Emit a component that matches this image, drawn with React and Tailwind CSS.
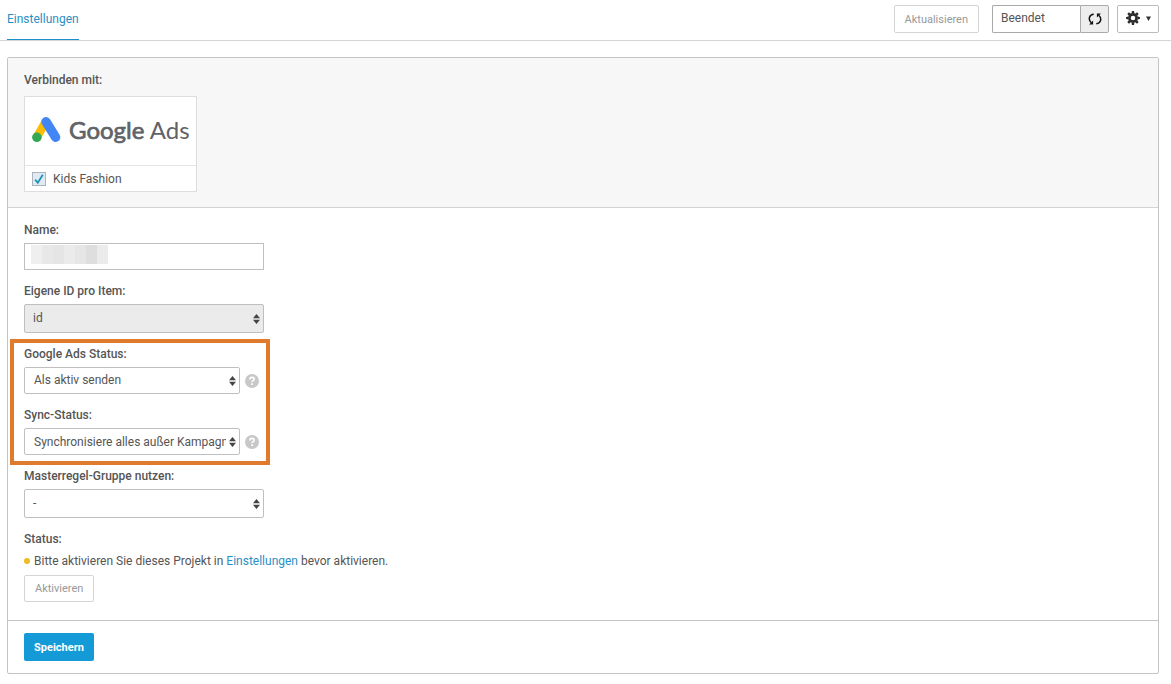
const labelClass = "block h-4 text-xs leading-4 font-medium text-[#555]";

function SortArrows() {
  return (
    <svg viewBox="0 0 7 10" className="pointer-events-none absolute right-1 top-1/2 h-[10px] w-[7px] -translate-y-1/2" fill="#444" aria-hidden="true">
      <path d="M3.500 0 7 4.200H0zM3.500 10 7 5.800H0z" />
    </svg>
  );
}

function SelectBox({ id, className, options, disabled }) {
  return (
    <div className="relative w-full">
      <select
        id={id}
        disabled={disabled}
        className={"block w-full appearance-none rounded-[2px] border border-[#bfbfbf] pr-[13px] text-xs text-[#555] opacity-100 disabled:bg-[#ebebeb] " + className}
      >
        {options.map((o) => (
          <option key={o}>{o}</option>
        ))}
      </select>
      <SortArrows />
    </div>
  );
}

function Field({ id, label, children }) {
  return (
    <div className="flex flex-col gap-[5px]">
      <label htmlFor={id} className={labelClass}>{label}</label>
      {children}
    </div>
  );
}

function Help() {
  return (
    <button type="button" aria-label="Hilfe" className="shrink-0">
      <svg viewBox="0 0 14 14" className="block size-[14px]" aria-hidden="true">
        <circle cx="7" cy="7" r="7" fill="#c8c8c8" />
        <path d="M4.9 5.5C4.9 4.1 5.8 3.4 7 3.4s2.2.7 2.2 1.8c0 1.4-2.1 1.4-2.1 2.9" fill="none" stroke="#fff" strokeWidth="1.6" />
        <rect x="6.2" y="9.2" width="1.8" height="1.7" fill="#fff" />
      </svg>
    </button>
  );
}

function AdsLogo() {
  return (
    <svg viewBox="0 0 160 34" className="h-[34px] w-[160px] shrink-0" role="img" aria-label="Google Ads">
      <path d="M13.500 8 5 23" stroke="#fbbc04" strokeWidth="8.500" strokeLinecap="round" />
      <path d="M14 7.800 23.600 23.300" stroke="#4285f4" strokeWidth="9.400" strokeLinecap="round" />
      <circle cx="4.900" cy="23.300" r="4.800" fill="#34a853" />
      <text x="37" y="25" fontSize="24" fill="#5f6368" className="font-[Lato,sans-serif]">
        <tspan stroke="#5f6368" strokeWidth="0.7">Google</tspan> Ads
      </text>
    </svg>
  );
}

const gearTeeth = [0, 45, 90, 135, 180, 225, 270, 315];

function GearIcon() {
  return (
    <svg viewBox="0 0 14 14" className="size-[14px]" fill="#2b2b2b" aria-hidden="true">
      {gearTeeth.map((a) => (
        <path key={a} d="M5.600 2.500 5.900.1h2.200l.3 2.400z" transform={`rotate(${a} 7 7)`} />
      ))}
      <circle cx="7" cy="7" r="3.600" fill="none" stroke="#2b2b2b" strokeWidth="2.600" />
    </svg>
  );
}

export default function App() {
  return (
    <div className="min-h-screen bg-white pb-[10px] font-[Roboto,sans-serif] text-xs text-[#555]">
      <header className="flex h-[41px] items-start justify-between border-b border-[#d4d4d4] pl-[7px] pr-3">
        <nav className="flex h-10">
          <a href="#einstellungen" className="border-b border-[#1b8fc9] pt-[11px] leading-4 text-[#2a8fc4]">Einstellungen</a>
        </nav>
        <div className="flex pt-[5px]">
          <button type="button" disabled className="h-7 rounded-[2px] border border-[#d4d4d4] px-[10px] pt-[2px] text-[11px] text-[#999]">Aktualisieren</button>
          <div className="ml-[13px] flex h-7">
            <input aria-label="Projektstatus" readOnly defaultValue="Beendet" className="w-[88px] rounded-l-[2px] border border-r-0 border-[#aaa] pb-[2px] pl-2 text-xs text-[#555]" />
            <button type="button" aria-label="Neu laden" className="flex w-[29px] items-center justify-center rounded-r-[2px] border border-[#aaa] bg-[#eee]">
              <svg viewBox="0 0 14 12" className="h-3 w-[14px]" aria-hidden="true">
                <path d="M5.700 1.200C.8 1.600 0 7 3.300 9.800M8.300 10.800C13.200 10.400 14 5 10.700 2.200" fill="none" stroke="#111" strokeWidth="1.500" />
                <path d="M5.100 7.600v4H1.100zM8.900 4.400v-4h4z" fill="#111" />
              </svg>
            </button>
          </div>
          <button type="button" aria-label="Optionen" className="ml-2 flex h-7 w-[42px] items-center justify-center gap-[6px] rounded-[2px] border border-[#bbb] pb-[2px]">
            <GearIcon />
            <svg viewBox="0 0 5 5" className="size-[5px]" aria-hidden="true"><path d="M0 .5h5L2.500 5z" fill="#333" /></svg>
          </button>
        </div>
      </header>

      <form className="ml-[7px] mr-3 mt-4 rounded-[2px] border border-[#c4c4c4]" onSubmit={(e) => e.preventDefault()}>
        <section className="border-b border-[#d4d4d4] bg-[#f7f7f7] px-4 pb-[15px] pt-[14px]">
          <h2 className={labelClass}>Verbinden mit:</h2>
          <div className="mt-2 w-[173px] border border-[#ddd] bg-white">
            <div className="flex h-[69px] items-center border-b border-[#e4e4e4] pl-[7px]">
              <AdsLogo />
            </div>
            <label className="flex h-[25px] items-center gap-[7px] pl-[7px]">
              <span className="relative flex size-[14px]">
                <input type="checkbox" defaultChecked className="peer size-[14px] appearance-none border border-[#aab4bf] bg-[#e3e9f2]" />
                <svg viewBox="0 0 14 14" className="pointer-events-none absolute inset-0 hidden peer-checked:block" aria-hidden="true">
                  <path d="M3.200 7.600 5.800 10.800 10.800 2.800" fill="none" stroke="#1c93b8" strokeWidth="1.8" />
                </svg>
              </span>
              Kids Fashion
            </label>
          </div>
        </section>

        <section className="flex flex-col gap-[13px] px-4 pb-[18px] pt-[14px]">
          <div className="w-60">
            <Field id="name" label="Name:">
              <div className="relative">
                <input id="name" type="text" className="block h-[27px] w-full border border-[#bfbfbf] px-2" />
                <div className="pointer-events-none absolute left-[7px] top-[2px] flex h-[19px] w-[77px]">
                  <span className="w-[11px] bg-[#efefef]" />
                  <span className="w-[11px] bg-[#e8e8e8]" />
                  <span className="w-[11px] bg-[#e5e5e5]" />
                  <span className="w-[11px] bg-[#ebebeb]" />
                  <span className="w-[11px] bg-[#e6e6e6]" />
                  <span className="w-[11px] bg-[#dedede]" />
                  <span className="w-[11px] bg-[#ebebeb]" />
                </div>
              </div>
            </Field>
          </div>

          <div className="w-60">
            <Field id="item-id" label="Eigene ID pro Item:">
              <SelectBox id="item-id" disabled options={["id"]} className="h-[29px] pb-[2px] pl-2" />
            </Field>
          </div>

          <div className="relative flex w-60 flex-col gap-[13px]">
            <Field id="ads-status" label="Google Ads Status:">
              <div className="flex items-center gap-[5px]">
                <div className="w-[216px]">
                  <SelectBox id="ads-status" options={["Als aktiv senden", "Als pausiert senden"]} className="h-[27px] pb-[2px] pl-[9px]" />
                </div>
                <Help />
              </div>
            </Field>
            <Field id="sync-status" label="Sync-Status:">
              <div className="flex items-center gap-[5px]">
                <div className="w-[216px]">
                  <SelectBox id="sync-status" options={["Synchronisiere alles außer Kampagnenstatus"]} className="h-[27px] pl-[9px]" />
                </div>
                <Help />
              </div>
            </Field>
            <div className="pointer-events-none absolute -bottom-[10px] -left-[14px] -top-[7px] w-[260px] border-4 border-[#e07b2d]" />
          </div>

          <div className="w-60">
            <Field id="master" label="Masterregel-Gruppe nutzen:">
              <SelectBox id="master" options={["-"]} className="h-[29px] pb-[2px] pl-2" />
            </Field>
          </div>

          <div className="flex flex-col items-start">
            <h2 className={labelClass}>Status:</h2>
            <p className="mt-[6px] flex items-center gap-1 leading-4">
              <span className="size-[6px] shrink-0 rounded-full bg-[#eebb22]" />
              <span>Bitte aktivieren Sie dieses Projekt in <a href="#einstellungen" className="text-[#2a8fc4]">Einstellungen</a> bevor aktivieren.</span>
            </p>
            <button type="button" disabled className="mt-[6px] h-[27px] rounded-[2px] border border-[#d4d4d4] px-[10px] pt-[2px] text-[11px] text-[#999]">Aktivieren</button>
          </div>
        </section>

        <footer className="border-t border-[#c4c4c4] px-4 py-3">
          <button type="submit" className="h-7 rounded-[2px] bg-[#149bd7] px-[10px] pt-[2px] text-[11px] font-bold text-white">Speichern</button>
        </footer>
      </form>
    </div>
  );
}
